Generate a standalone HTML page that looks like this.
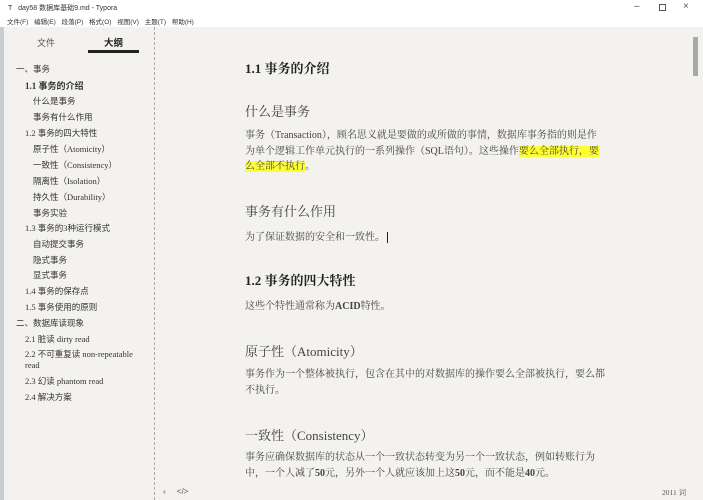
<!DOCTYPE html>
<html><head><meta charset="utf-8"><style>
*{margin:0;padding:0;box-sizing:border-box}
body{width:703px;height:500px;overflow:hidden;background:#f3f2ee;font-family:"Liberation Serif","Noto Serif CJK SC",serif;color:#333;position:relative}
.t{position:absolute;white-space:nowrap}
.s{font-family:"Liberation Sans","Noto Sans CJK SC",sans-serif}
#title{position:absolute;left:0;top:0;width:703px;height:27px;background:#fff}
#edgeL{position:absolute;left:0;top:27px;width:4px;height:473px;background:#c9ccd0}
#side{position:absolute;left:4px;top:27px;width:151px;height:473px;background:#f3f2ee;border-right:1px dashed #aaa}
.o{position:absolute;font-size:8.5px;color:#333;white-space:nowrap;font-family:"Liberation Serif","Noto Sans CJK SC",sans-serif}
.h{background:#ffff33}
.p{font-size:10px;line-height:15.5px;color:#444;white-space:normal;width:358px}
</style></head><body>
<div id="title"></div>
<div class="t s" style="left:8px;top:3px;font-size:7px;color:#333">T&nbsp;&nbsp; day58 数据库基础9.md - Typora</div>
<div class="t s" style="left:7px;top:16px;font-size:6.5px;color:#333;word-spacing:4px">文件(F) 编辑(E) 段落(P) 格式(O) 视图(V) 主题(T) 帮助(H)</div>
<div class="t s" style="left:634px;top:1px;font-size:10px;color:#555">–</div>
<div style="position:absolute;left:659px;top:4px;width:7px;height:7px;border:1px solid #555"></div>
<div class="t s" style="left:683px;top:1px;font-size:10px;color:#555">×</div>
<div id="edgeL"></div>
<div id="side"></div>
<div class="t s" style="left:37px;top:36px;font-size:9px;color:#555">文件</div>
<div class="t s" style="left:104px;top:35px;font-size:9.5px;font-weight:bold;color:#222">大纲</div>
<div style="position:absolute;left:88px;top:50px;width:51px;height:3px;background:#222"></div>
<div class="o" style="left:16px;top:63px">一、事务</div>
<div class="o" style="left:25px;top:79px;font-weight:bold;font-size:9px">1.1 事务的介绍</div>
<div class="o" style="left:33px;top:95px">什么是事务</div>
<div class="o" style="left:33px;top:111px">事务有什么作用</div>
<div class="o" style="left:25px;top:127px">1.2 事务的四大特性</div>
<div class="o" style="left:33px;top:143px">原子性（Atomicity）</div>
<div class="o" style="left:33px;top:159px">一致性（Consistency）</div>
<div class="o" style="left:33px;top:175px">隔离性（Isolation）</div>
<div class="o" style="left:33px;top:191px">持久性（Durability）</div>
<div class="o" style="left:33px;top:207px">事务实验</div>
<div class="o" style="left:25px;top:222px">1.3 事务的3种运行模式</div>
<div class="o" style="left:33px;top:238px">自动提交事务</div>
<div class="o" style="left:33px;top:254px">隐式事务</div>
<div class="o" style="left:33px;top:269px">显式事务</div>
<div class="o" style="left:25px;top:285px">1.4 事务的保存点</div>
<div class="o" style="left:25px;top:301px">1.5 事务使用的原则</div>
<div class="o" style="left:16px;top:317px">二、数据库读现象</div>
<div class="o" style="left:25px;top:333px">2.1 脏读 dirty read</div>
<div class="o" style="left:25px;top:349px;line-height:11px">2.2 不可重复读 non-repeatable<br>read</div>
<div class="o" style="left:25px;top:375px">2.3 幻读 phantom read</div>
<div class="o" style="left:25px;top:391px">2.4 解决方案</div>
<div style="position:absolute;left:693px;top:37px;width:5px;height:39px;background:#a8a8a8"></div>
<div class="t" style="left:245px;top:58px;font-size:13px;font-weight:bold;color:#222">1.1 事务的介绍</div>
<div class="t" style="left:245px;top:101px;font-size:13px;color:#444">什么是事务</div>
<div class="t p" style="left:245px;top:128px">事务（Transaction），顾名思义就是要做的或所做的事情，数据库事务指的则是作为单个逻辑工作单元执行的一系列操作（SQL语句）。这些操作<span class="h">要么全部执行，要么全部不执行</span>。</div>
<div class="t" style="left:245px;top:201px;font-size:13px;color:#444">事务有什么作用</div>
<div class="t" style="left:245px;top:228px;font-size:10px;color:#444">为了保证数据的安全和一致性。<span style="border-left:1px solid #222;margin-left:2px"></span></div>
<div class="t" style="left:245px;top:270px;font-size:13px;font-weight:bold;color:#222">1.2 事务的四大特性</div>
<div class="t" style="left:245px;top:297px;font-size:10px;color:#444">这些个特性通常称为<b>ACID</b>特性。</div>
<div class="t" style="left:245px;top:341px;font-size:13px;color:#444">原子性（Atomicity）</div>
<div class="t p" style="left:245px;top:367px;width:368px">事务作为一个整体被执行，包含在其中的对数据库的操作要么全部被执行，要么都不执行。</div>
<div class="t" style="left:245px;top:425px;font-size:13px;color:#444">一致性（Consistency）</div>
<div class="t p" style="left:245px;top:450px">事务应确保数据库的状态从一个一致状态转变为另一个一致状态，例如转账行为中，一个人减了<b>50</b>元，另外一个人就应该加上这<b>50</b>元，而不能是<b>40</b>元。</div>
<div class="t s" style="left:163px;top:487px;font-size:8px;color:#555">‹&nbsp;&nbsp;&nbsp;&nbsp; &lt;/&gt;</div>
<div class="t" style="left:662px;top:487px;font-size:7.5px;color:#555">2011 词</div>
</body></html>
